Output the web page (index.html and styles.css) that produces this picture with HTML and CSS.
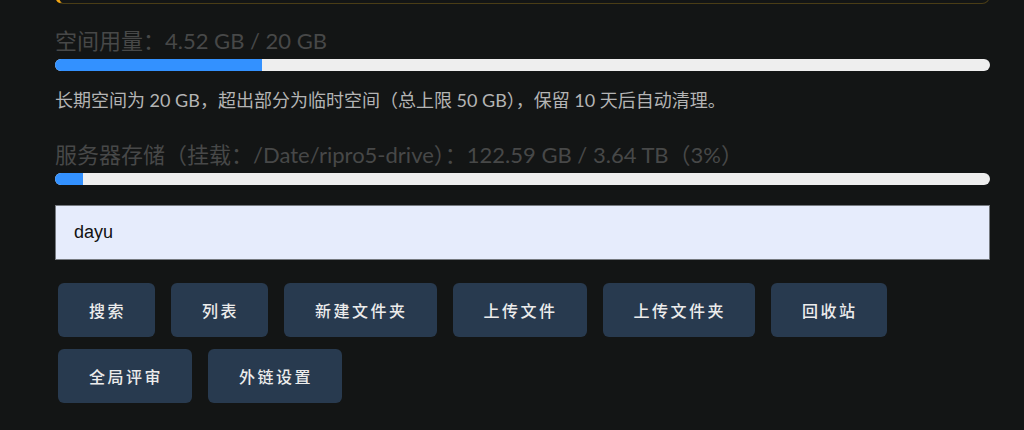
FILE: index.html
```html
<!DOCTYPE html>
<html lang="zh-CN">
<head>
    <meta charset="UTF-8">
    <meta name="viewport" content="width=device-width, initial-scale=1.0">
    <title>网盘</title>
    <link rel="stylesheet" href="styles.css">
</head>
<body>
    <div class="panel">
        <div class="notice"></div>

        <div class="usage-title">空间用量：4.52 GB / 20 GB</div>
        <div class="bar"><div class="bar-fill" style="width: 22.1%;"></div></div>
        <p class="usage-note">长期空间为 20 GB，超出部分为临时空间（总上限 50 GB），保留 10 天后自动清理。</p>

        <div class="usage-title server">服务器存储（挂载：/Date/ripro5-drive）：122.59 GB / 3.64 TB（3%）</div>
        <div class="bar"><div class="bar-fill" style="width: 3%;"></div></div>

        <input class="search" type="text" value="dayu">

        <div class="actions">
            <button class="btn">搜索</button>
            <button class="btn">列表</button>
            <button class="btn">新建文件夹</button>
            <button class="btn">上传文件</button>
            <button class="btn">上传文件夹</button>
            <button class="btn">回收站</button>
            <button class="btn">全局评审</button>
            <button class="btn">外链设置</button>
        </div>
    </div>
</body>
</html>
```

FILE: styles.css
```css
body {
    margin: 0;
    background-color: #131515;
    font-family: Lato, "Noto Sans CJK SC", sans-serif;
    overflow: hidden;
}

.panel {
    width: 935px;
    margin-left: 55px;
}

.notice {
    height: 49px;
    margin-top: -47px;
    border: 1px solid #4a3d16;
    border-left: 4px solid #f2a614;
    border-radius: 8px;
}

.usage-title {
    margin-top: 23px;
    font-size: 22px;
    line-height: 28px;
    color: #474848;
}

.usage-title.server {
    margin-top: 29px;
}

.bar {
    height: 12px;
    margin-top: 4px;
    background: #eeeeee;
    border-radius: 6px;
    overflow: hidden;
}

.bar-fill {
    height: 100%;
    background: #3391ff;
}

.usage-note {
    margin: 17px 0 0;
    font-size: 18px;
    line-height: 24px;
    color: #b4b4b4;
}

.search {
    display: block;
    box-sizing: border-box;
    width: 100%;
    height: 55px;
    margin-top: 20px;
    padding: 0 18px;
    font-family: "Liberation Sans", Arial, sans-serif;
    font-size: 18px;
    color: #111;
    background: #e6ecfc;
    border: 1px solid #767a80;
    outline: none;
}

.actions {
    display: flex;
    flex-wrap: wrap;
    gap: 12px 16px;
    margin: 23px 0 0 3px;
}

.btn {
    height: 54px;
    padding: 0 29px 0 31px;
    font-family: "Noto Sans CJK SC", sans-serif;
    font-size: 16px;
    font-weight: 500;
    letter-spacing: 2.5px;
    color: #ececec;
    background: #283a4f;
    border: none;
    border-radius: 6px;
    cursor: pointer;
}

.btn:hover {
    background: #31465e;
}
```
